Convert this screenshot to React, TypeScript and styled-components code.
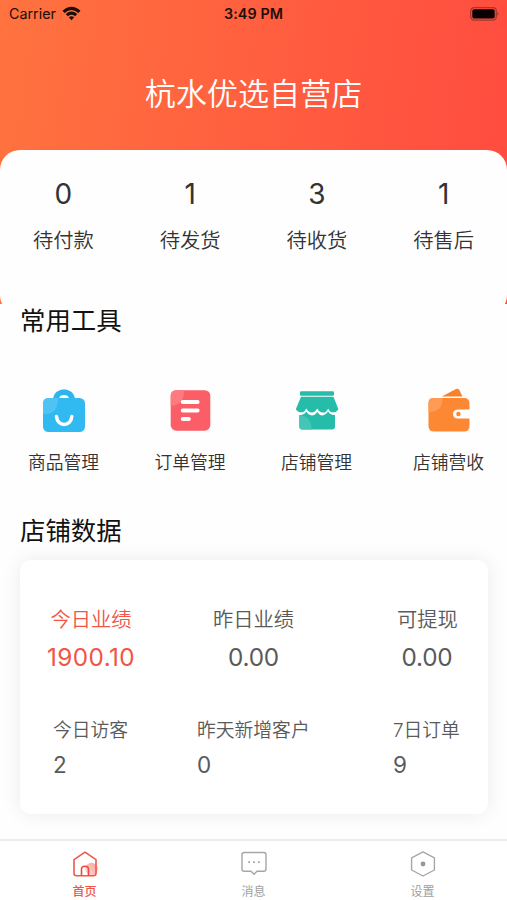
import React from 'react';
import styled, { createGlobalStyle } from 'styled-components';

const GlobalStyle = createGlobalStyle`
  * { box-sizing: border-box; }
  body {
    margin: 0;
    background: #fefefe;
    font-family: Inter, "Noto Sans CJK SC", sans-serif;
    color: #333;
  }
`;

const Screen = styled.div`
  width: 507px;
  height: 900px;
  overflow: hidden;
  display: flex;
  flex-direction: column;
`;

const Header = styled.header`
  height: 304px;
  flex: none;
  background: linear-gradient(97deg, #ff733f 0%, #ff623f 42%, #ff4f3f 90%, #ff4d3f 100%);
`;

const StatusBar = styled.div`
  height: 28px;
  padding: 0 7px 0 9px;
  display: grid;
  grid-template-columns: 1fr auto 1fr;
  align-items: center;
  font-size: 14.3px;
  line-height: 28px;
  color: #1d0c08;
`;

const Carrier = styled.div`
  display: flex;
  align-items: center;
  gap: 6px;
  svg { margin-top: -2px; }
`;

const Clock = styled.div`
  padding-right: 2px;
  font-weight: 600;
  font-size: 14.3px;
  letter-spacing: 0.1px;
`;

const Battery = styled.div`
  display: flex;
  justify-content: flex-end;
  svg { margin-top: -1px; }
`;

const ShopName = styled.h1`
  margin: 0;
  height: 122px;
  padding-top: 45px;
  text-align: center;
  font-size: 31.1px;
  line-height: 42px;
  font-weight: 350;
  color: #fff;
`;

const OrderPanel = styled.section`
  height: 165px;
  padding-top: 28px;
  border-radius: 20px;
  background: #fefefe;
  display: grid;
  grid-template-columns: repeat(4, 1fr);
  text-align: center;
`;

const OrderCount = styled.div`
  font-size: 28px;
  line-height: 33px;
`;

const OrderLabel = styled.div`
  margin-top: 16px;
  font-size: 20.3px;
  line-height: 28px;
  font-weight: 350;
`;

const SectionTitle = styled.h2<{ $top: number }>`
  margin: ${(p) => p.$top}px 0 0 20px;
  font-size: 25.4px;
  line-height: 36px;
  font-weight: 400;
  color: #111;
`;

const Tools = styled.section`
  margin-top: 48px;
  display: grid;
  grid-template-columns: 127px 126px 127px 127px;
`;

const Tool = styled.div`
  display: flex;
  flex-direction: column;
  align-items: center;
  &:last-child { padding-left: 10px; }
`;

const ToolLabel = styled.div`
  margin-top: 17px;
  font-size: 17.8px;
  line-height: 26px;
  white-space: nowrap;
  font-weight: 350;
`;

const DataCard = styled.section`
  margin: 11px 19px 0 20px;
  height: 254px;
  flex: none;
  border-radius: 11px;
  background: #fff;
  box-shadow: 0 0 20px rgba(0, 0, 0, 0.08);
  color: #5a5a5a;
`;

const Summary = styled.div`
  padding: 45px 31px 0 27px;
  display: grid;
  grid-template-columns: 88px 1fr 60px;
`;

const SummaryItem = styled.div<{ $active?: boolean }>`
  text-align: center;
  white-space: nowrap;
  color: ${(p) => (p.$active ? '#f25445' : 'inherit')};
  &:nth-child(2) { padding-right: 25px; }
`;

const SummaryLabel = styled.div`
  font-size: 20.3px;
  line-height: 30px;
  font-weight: 350;
`;

const SummaryValue = styled.div<{ $wide?: boolean }>`
  margin-top: 6px;
  font-size: 24.3px;
  line-height: 32px;
  letter-spacing: ${(p) => (p.$wide ? '0.4px' : '-0.2px')};
`;

const Details = styled.div`
  padding: 44px 0 0 33px;
  display: grid;
  grid-template-columns: 144px 196px 1fr;
`;

const DetailLabel = styled.div`
  font-size: 18.8px;
  line-height: 28px;
  white-space: nowrap;
  font-weight: 350;
`;

const DetailValue = styled.div`
  margin-top: 5px;
  font-size: 22.5px;
  line-height: 30px;
`;

const TabBar = styled.nav`
  margin-top: auto;
  height: 61px;
  flex: none;
  border-top: 2px solid #ececec;
  background: #fff;
  display: grid;
  grid-template-columns: repeat(3, 1fr);
`;

const Tab = styled.div<{ $active?: boolean }>`
  padding-top: 10px;
  display: flex;
  flex-direction: column;
  align-items: center;
  font-size: 12px;
  line-height: 18px;
  font-weight: ${(p) => (p.$active ? 500 : 400)};
  color: ${(p) => (p.$active ? '#f25445' : '#a0a0a0')};
  svg { margin-bottom: 6px; }
`;

const WifiIcon = () => (
  <svg width="19" height="15" viewBox="0 0 19 15">
    <path d="M0.5 4.7Q9.5-3 18.5 4.7L16.4 7Q9.5 1.2 2.6 7Z" fill="#1d0c08" />
    <path d="M3.7 8Q9.5 3.2 15.3 8L13.1 10.3Q9.5 7.4 5.9 10.3Z" fill="#1d0c08" />
    <path d="M6.8 11.2Q9.5 9.2 12.2 11.2L9.5 14.2Z" fill="#1d0c08" />
  </svg>
);

const BatteryIcon = () => (
  <svg width="30" height="14" viewBox="0 0 30 14">
    <rect x="0.7" y="0.7" width="25.6" height="12.4" rx="3.4" fill="none" stroke="#a3382c" strokeWidth="1.3" />
    <rect x="2.3" y="2.3" width="22.4" height="9.2" rx="1.8" fill="#090000" />
    <path d="M27.4 4.8Q29.7 6.9 27.4 9Z" fill="#a3382c" />
  </svg>
);

const BagIcon = () => (
  <svg width="44" height="46" viewBox="0 0 44 46">
    <path d="M13 12.5C14 1.5 30 1.5 31 12.5" fill="#2eb4ee" stroke="#2eb4ee" strokeWidth="4" />
    <rect x="1" y="11" width="42" height="34" rx="5.5" fill="#31b9f1" />
    <path d="M1 26.5V16.5Q1 11 6.5 11H16Q16 27 3.5 27Z" fill="#4fc4f4" />
    <path d="M17.2 11Q17.8 8 22 8T26.8 11Z" fill="#fff" />
    <path d="M14.5 29.5C15.5 40 28.8 40 29.8 29.5" fill="none" stroke="#fff" strokeWidth="3.5" strokeLinecap="round" />
  </svg>
);

const OrderIcon = () => (
  <svg width="44" height="46" viewBox="0 0 44 46">
    <rect x="2.7" y="3.2" width="39.6" height="40.5" rx="5.5" fill="#fc5e67" />
    <path d="M2.7 18.7V8.7Q2.7 3.2 8.2 3.2H16Q16.5 18.2 2.7 18.7Z" fill="#fd7a81" />
    <path d="M14.7 15H29.7M14.7 23.5H29.7M14.7 32H20.9" stroke="#fff" strokeWidth="3.8" strokeLinecap="round" />
  </svg>
);

const StoreIcon = () => (
  <svg width="44" height="46" viewBox="0 0 44 46">
    <rect x="5" y="4.3" width="34" height="4.4" rx="1.2" fill="#25bdaa" />
    <path d="M6 9.7H38.5L43.4 22.2Q41.4 25.5 38 25.3Q34.8 25.4 33.2 21.4Q30.7 26.4 27.5 25.4Q24.5 25.4 22.2 21.4Q19.8 25.4 16.8 25.4Q13.8 25.6 11.2 21.4Q9.5 25.4 6.2 25.3Q2.7 25.3.8 22.2Z" fill="#25bdaa" />
    <path d="M4.3 28Q9.3 28.4 11.2 24.6Q13.7 28.4 16.8 28.4T22.2 24.9Q24.7 28.6 27.7 28.4T33.2 24.6Q35 28.3 40 28V39.5Q40 42.5 37 42.5H7.3Q4.3 42.5 4.3 39.5Z" fill="#25bdaa" />
    <path d="M4.3 28Q16 29 16.7 42.5H7.3Q4.3 42.5 4.3 39.5Z" fill="#44c6b6" />
  </svg>
);

const WalletIcon = () => (
  <svg width="44" height="46" viewBox="0 0 44 46">
    <path d="M14.8 9.5L29 2Q31 1 32.3 3L35.5 9.5Z" fill="#f9802c" />
    <path d="M6.5 11H37Q42.5 11 42.5 16.5V22.5H31Q26 22.8 26 27T31 31.6H42.5V39Q42.5 44.5 37 44.5H7Q1.5 44.5 1.5 39V16Q1.5 11 6.5 11Z" fill="#fd8833" />
    <path d="M1.5 25V16Q1.5 11 6.5 11H15.5Q16 25 1.5 25Z" fill="#fe9b54" />
    <circle cx="31.4" cy="27" r="2.2" fill="#fd8833" />
  </svg>
);

const HomeIcon = () => (
  <svg width="26" height="26" viewBox="0 0 26 26">
    <defs>
      <linearGradient id="homeGlow" x1="1" y1="0" x2="0" y2="1">
        <stop offset="0" stopColor="#f8a39a" />
        <stop offset="1" stopColor="#fcd9d5" />
      </linearGradient>
    </defs>
    <circle cx="19.5" cy="18" r="6.2" fill="url(#homeGlow)" />
    <path d="M2 8.7L13 1.2L24 8.7V22.2Q24 24.7 21.5 24.7H4.5Q2 24.7 2 22.2Z" fill="none" stroke="#f05849" strokeWidth="1.6" strokeLinejoin="round" />
    <path d="M9.5 24.5V18.5Q9.5 15.3 13 15.3T16.5 18.5V24.5" fill="none" stroke="#ee493b" strokeWidth="1.6" />
  </svg>
);

const MessageIcon = () => (
  <svg width="26" height="26" viewBox="0 0 26 26">
    <path d="M3.2 1.5H22.8Q25 1.5 25 3.7V18Q25 20.2 22.8 20.2H16L13 23.3L10 20.2H3.2Q1 20.2 1 18V3.7Q1 1.5 3.2 1.5Z" fill="none" stroke="#a6a6a6" strokeWidth="1.4" strokeLinejoin="round" />
    <path d="M7.3 11.2H8.9M12.2 11.2H13.8M17.1 11.2H18.7" stroke="#9b9b9b" strokeWidth="1.7" />
  </svg>
);

const SettingsIcon = () => (
  <svg width="26" height="26" viewBox="0 0 26 26">
    <path d="M13 .9L24.4 6.8V19L13 25L1.6 19V6.8Z" fill="none" stroke="#a6a6a6" strokeWidth="1.4" strokeLinejoin="round" />
    <circle cx="13" cy="13" r="2.4" fill="#979797" />
  </svg>
);

const orders = [
  { count: '0', label: '待付款' },
  { count: '1', label: '待发货' },
  { count: '3', label: '待收货' },
  { count: '1', label: '待售后' },
];

const tools = [
  { label: '商品管理', Icon: BagIcon },
  { label: '订单管理', Icon: OrderIcon },
  { label: '店铺管理', Icon: StoreIcon },
  { label: '店铺营收', Icon: WalletIcon },
];

const summary = [
  { label: '今日业绩', value: '1900.10', active: true },
  { label: '昨日业绩', value: '0.00' },
  { label: '可提现', value: '0.00' },
];

const details = [
  { label: '今日访客', value: '2' },
  { label: '昨天新增客户', value: '0' },
  { label: '7日订单', value: '9' },
];

const tabs = [
  { label: '首页', Icon: HomeIcon, active: true },
  { label: '消息', Icon: MessageIcon },
  { label: '设置', Icon: SettingsIcon },
];

export default function App() {
  return (
    <Screen>
      <GlobalStyle />
      <Header>
        <StatusBar>
          <Carrier>Carrier <WifiIcon /></Carrier>
          <Clock>3:49 PM</Clock>
          <Battery><BatteryIcon /></Battery>
        </StatusBar>
        <ShopName>杭水优选自营店</ShopName>
        <OrderPanel>
          {orders.map((o) => (
            <div key={o.label}>
              <OrderCount>{o.count}</OrderCount>
              <OrderLabel>{o.label}</OrderLabel>
            </div>
          ))}
        </OrderPanel>
      </Header>
      <SectionTitle $top={-1}>常用工具</SectionTitle>
      <Tools>
        {tools.map(({ label, Icon }) => (
          <Tool key={label}>
            <Icon />
            <ToolLabel>{label}</ToolLabel>
          </Tool>
        ))}
      </Tools>
      <SectionTitle $top={37}>店铺数据</SectionTitle>
      <DataCard>
        <Summary>
          {summary.map((s) => (
            <SummaryItem key={s.label} $active={s.active}>
              <SummaryLabel>{s.label}</SummaryLabel>
              <SummaryValue $wide={s.active}>{s.value}</SummaryValue>
            </SummaryItem>
          ))}
        </Summary>
        <Details>
          {details.map((d) => (
            <div key={d.label}>
              <DetailLabel>{d.label}</DetailLabel>
              <DetailValue>{d.value}</DetailValue>
            </div>
          ))}
        </Details>
      </DataCard>
      <TabBar>
        {tabs.map(({ label, Icon, active }) => (
          <Tab key={label} $active={active}>
            <Icon />
            {label}
          </Tab>
        ))}
      </TabBar>
    </Screen>
  );
}
